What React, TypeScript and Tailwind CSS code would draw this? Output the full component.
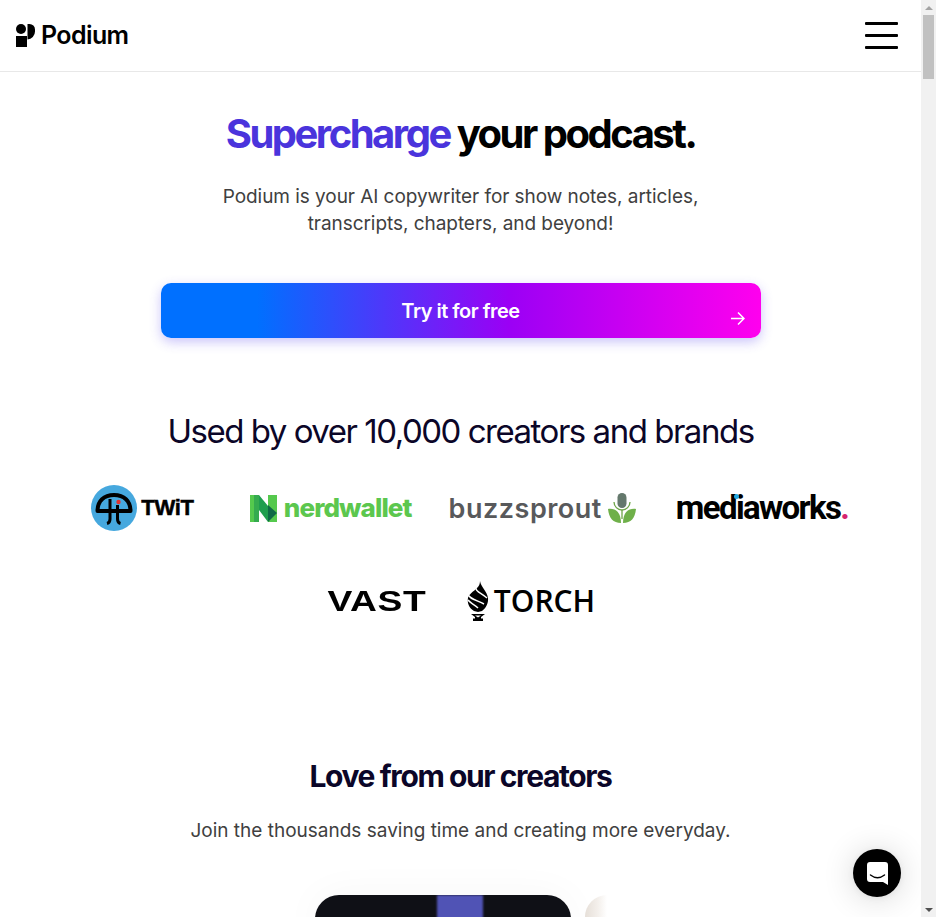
import React from "react";

const inter = "font-['Inter',sans-serif]";

function PodiumMark() {
  return (
    <svg width="19" height="23" viewBox="0 0 19 23">
      <circle cx="5" cy="5" r="5" fill="#000" />
      <rect x="0" y="12" width="11" height="11" fill="#000" />
      <path d="M11.500 0h2a5.500 5.500 0 0 1 5.500 5.500v2a8 8 0 0 1-7.500 8z" fill="#000" />
    </svg>
  );
}

function TwitLogo() {
  return (
    <div className="flex items-center gap-[4px] w-[137px] pl-[18.5px]">
      <svg width="46" height="46" viewBox="0 0 46 46" className="shrink-0">
        <circle cx="23" cy="23" r="23" fill="#46a8de" />
        <path d="M6.500 26C6.500 16 13 10 23 10S39.500 16 39.500 26Z" fill="none" stroke="#000" strokeWidth="4" strokeLinejoin="round" />
        <path d="M19 14v20c0 3-1 4-3 4.500" fill="none" stroke="#000" strokeWidth="3" />
        <path d="M26.500 20v14c0 3 1 4 3 4.500" fill="none" stroke="#000" strokeWidth="3" />
        <circle cx="27.500" cy="17" r="2.200" fill="#e2342f" />
      </svg>
      <span className="font-['Liberation_Sans',sans-serif] font-bold text-[22px] leading-none text-black tracking-[-0.3px] [-webkit-text-stroke:0.5px_#000]">TWiT</span>
    </div>
  );
}

function NerdwalletLogo() {
  return (
    <div className="flex items-center gap-[7px]">
      <svg width="27" height="27" viewBox="0 0 27 27" className="shrink-0">
        <path d="M0 0H9V27H0Z" fill="#55c94d" />
        <path d="M4 0H9V27H4Z" fill="#35ab4f" />
        <path d="M9 0L18 11V27L9 15Z" fill="#1f9e4e" />
        <path d="M18 0H27V27H18Z" fill="#55c94d" />
        <path d="M18 10L27 18L18 27Z" fill="#0f6a46" />
      </svg>
      <span className="font-['Inter',sans-serif] font-extrabold text-[26px] leading-none text-[#5cc74e] tracking-[-0.9px]">nerdwallet</span>
    </div>
  );
}

function BuzzsproutLogo() {
  return (
    <div className="flex items-center gap-[6px] -ml-[3px]">
      <span className="font-['Inter',sans-serif] font-semibold text-[27px] leading-none text-[#58595b] tracking-[0.5px]">buzzsprout</span>
      <svg width="28" height="30" viewBox="0 0 28 30" className="shrink-0">
        <rect x="9.500" y="0" width="9" height="15" rx="4.500" fill="#64786c" />
        <path d="M6 9a8 8 0 0 0 16 0" fill="none" stroke="#6da548" strokeWidth="1.300" />
        <path d="M14 17v9" stroke="#6da548" strokeWidth="1.300" />
        <path d="M0 16c7-1 13 3 13 14C5 30 1 25 0 16z" fill="#6fb04a" />
        <path d="M28 16c-7-1-13 3-13 14 8 0 12-5 13-14z" fill="#6fb04a" />
      </svg>
    </div>
  );
}

function MediaworksLogo() {
  return (
    <div className="relative">
      <span className="font-['Roboto',sans-serif] font-bold text-[33px] leading-none text-black tracking-[-1.650px]">
        mediaworks<span className="text-[#d6246e]">.</span>
      </span>
      <span className="absolute left-[58px] top-[3px] w-[5px] h-[5px] rounded-full bg-[#25a9e0]" />
    </div>
  );
}

function TorchLogo() {
  return (
    <div className="flex items-center gap-[3px]">
      <svg width="26" height="40" viewBox="0 0 26 40" className="shrink-0">
        <path d="M15 0c1 6 7 10 8 17 .6 5-2 10-6 13l-4 1-4-1C4 27 2 22 3 17c1-4 5-6 9-10 2-2 3-4 3-7z" fill="#000" />
        <path d="M3 13c0 4 8 6 16 10M3 19c2 3 6 4 10 8M11 7c-1 3 5 5 11 10" fill="none" stroke="#fff" strokeWidth="1.500" />
        <path d="M6 33h14l-4 3v1.500h2V40H8v-2.500h2V36zM10 34.500l3 2 3-2z" fill="#000" fillRule="evenodd" />
      </svg>
      <span className="font-['Open_Sans',sans-serif] font-semibold text-[30px] leading-none text-black tracking-[0px]">TORCH</span>
    </div>
  );
}

export default function App() {
  return (
    <div className={`flex h-[917px] w-full overflow-hidden bg-white ${inter}`}>
      <div className="relative flex-1 min-w-0 overflow-hidden">
        <header className="h-[72px] border-b border-[#e8e8e8] flex items-center justify-between pl-[16px] pr-[23px]">
          <div className="flex items-center gap-[6px]">
            <PodiumMark />
            <span className="font-['Inter',sans-serif] font-semibold text-[25px] leading-none tracking-[-0.6px] text-black">Podium</span>
          </div>
          <div className="flex flex-col gap-[9px] w-[33px]">
            <div className="h-[3px] bg-black rounded-[1px]" />
            <div className="h-[3px] bg-black rounded-[1px]" />
            <div className="h-[3px] bg-black rounded-[1px]" />
          </div>
        </header>

        <main className="flex flex-col items-center">
          <h1 className="mt-[36px] text-[40px] leading-[52px] font-bold tracking-[-2.5px] text-black whitespace-nowrap">
            <span className="text-[#4a34dc]">Supercharge</span> your podcast.
          </h1>
          <p className="mt-[23px] text-[19px] leading-[27px] tracking-[-0.05px] text-[#404040] text-center">
            Podium is your AI copywriter for show notes, articles,
            <br />
            transcripts, chapters, and beyond!
          </p>
          <button className="relative mt-[46px] w-[600px] h-[55px] rounded-[10px] bg-[linear-gradient(90deg,#0070ff_16%,#9b00f5_58%,#ff00ee_100%)] shadow-[0_4px_12px_rgba(80,60,240,0.3)] text-white font-semibold text-[20px] tracking-[-0.5px] flex items-center justify-center">
            Try it for free
            <svg className="absolute right-[16px] top-[28px]" width="15" height="15" viewBox="0 0 15 15" fill="none" stroke="#fff" strokeWidth="1.500">
              <path d="M1 7.500h12.500M8 1.500l6 6-6 6" />
            </svg>
          </button>

          <h2 className="mt-[69px] text-[33px] leading-[48px] font-normal tracking-[-1.480px] text-[#0b0628] whitespace-nowrap">
            Used by over 10,000 creators and brands
          </h2>

          <div className="mt-[30px] w-full flex items-center justify-center gap-[40px] h-[46px]">
            <TwitLogo />
            <NerdwalletLogo />
            <BuzzsproutLogo />
            <MediaworksLogo />
          </div>
          <div className="mt-[49px] flex items-center gap-[39px] h-[42px]">
            <div className="w-[100px] flex justify-end">
              <div className="w-[98px] flex justify-center">
                <span className="font-['Liberation_Sans',sans-serif] font-bold text-[30px] leading-none text-black tracking-[0.5px] scale-x-[1.24] whitespace-nowrap">VAST</span>
              </div>
            </div>
            <TorchLogo />
          </div>

          <h2 className="mt-[132px] text-[30px] leading-[44px] font-bold tracking-[-1.400px] text-[#0b0628] whitespace-nowrap">
            Love from our creators
          </h2>
          <p className="mt-[19px] text-[19px] leading-[28px] text-[#404040] whitespace-nowrap">
            Join the thousands saving time and creating more everyday.
          </p>

          <div className="mt-[50px] flex gap-[14px] w-[292px] h-[40px]">
            <div className="w-[256px] shrink-0 h-[40px] rounded-t-[24px] bg-[#0f1016] overflow-hidden shadow-[0_0_40px_rgba(0,0,0,0.04)]">
              <div className="ml-[122px] w-[46px] h-full bg-[#5053b5] blur-[0.8px]" />
            </div>
            <div className="w-[22px] shrink-0 h-[40px] rounded-tl-[24px] bg-[linear-gradient(90deg,#e6dfd8,#f4f0ec_60%,#ffffff)]" />
          </div>
        </main>

        <div className="absolute right-[20px] bottom-[20px] w-[48px] h-[48px] rounded-full bg-black flex items-center justify-center shadow-[0_1px_6px_rgba(0,0,0,0.06),0_2px_32px_rgba(0,0,0,0.16)]">
          <svg width="21" height="23" viewBox="0 0 21 23">
            <path d="M3 0h15a3 3 0 0 1 3 3v20l-5-3H3a3 3 0 0 1-3-3V3a3 3 0 0 1 3-3z" fill="#fff" />
            <path d="M3.500 13c4.500 3.500 9.500 3.500 14 0" fill="none" stroke="#000" strokeWidth="1.500" strokeLinecap="round" />
          </svg>
        </div>
      </div>

      <div className="w-[15px] shrink-0 bg-[#f1f1f1] flex flex-col items-center">
        <div className="h-[15px] flex items-center justify-center">
          <div className="w-0 h-0 border-l-[4px] border-r-[4px] border-b-[4px] border-l-transparent border-r-transparent border-b-[#a3a3a3]" />
        </div>
        <div className="w-[11px] h-[64px] bg-[#c1c1c1]" />
        <div className="flex-1" />
        <div className="h-[15px] flex items-center justify-center">
          <div className="w-0 h-0 border-l-[4px] border-r-[4px] border-t-[4px] border-l-transparent border-r-transparent border-t-[#505050]" />
        </div>
      </div>
    </div>
  );
}
